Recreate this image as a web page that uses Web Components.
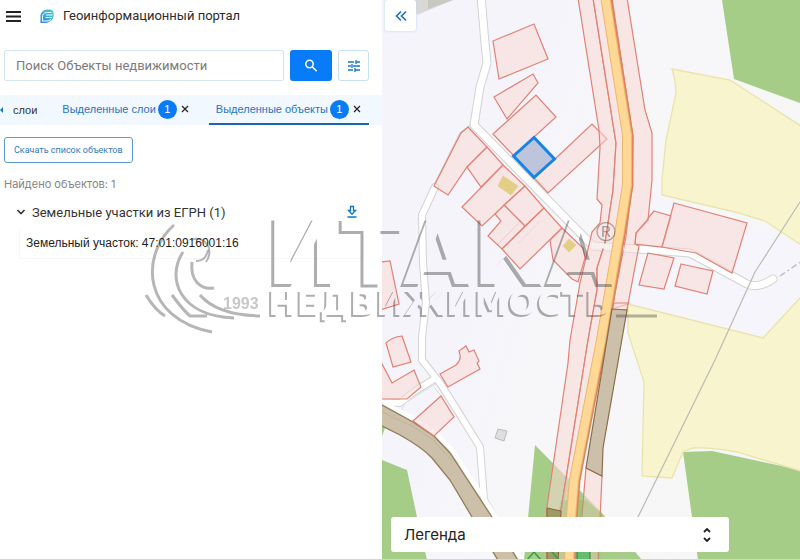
<!DOCTYPE html>
<html lang="ru">
<head>
<meta charset="utf-8">
<meta name="viewport" content="width=device-width, initial-scale=1">
<title>Геоинформационный портал</title>
<style>
html, body { height: 100%; }
body { margin: 0; font-family: Roboto, "Liberation Sans", sans-serif; color: #333; background: #fff; overflow: hidden; }
</style>
</head>
<body>
<geo-portal></geo-portal>
<script>
const define = (name, html) => customElements.define(name, class extends HTMLElement {
  constructor() {
    super();
    const t = document.createElement('template');
    t.innerHTML = '<style>*{box-sizing:border-box}button,input{font:inherit;margin:0}svg{display:block}</style>' + html;
    this.attachShadow({ mode: 'open' }).append(t.content.cloneNode(true));
  }
});

define('portal-header', `
<style>
:host { display: flex; align-items: center; height: 32px; padding-left: 4px; gap: 16px; }
button { border: 0; background: none; padding: 0; width: 18px; height: 18px; }
.brand { display: flex; align-items: center; gap: 8px; font-size: 13px; line-height: 16px; color: #2c2c2c; }
</style>
<button aria-label="Меню"><svg width="18" height="18" viewBox="0 0 18 18" stroke="#222" stroke-width="2"><path d="M2 5h15M2 9.500h15M2 14h15"/></svg></button>
<div class="brand">
<svg width="17" height="16" viewBox="0 0 17 16" fill="none"><defs><linearGradient id="g" x1="0" y1="1" x2="1" y2="0"><stop stop-color="#3d7ddd"/><stop offset="1" stop-color="#43dcd2"/></linearGradient></defs>
<path d="M2.500 15V8A6.500 6.500 0 0 1 9 1.500h3C16 2 16 6 15.500 8.500 14.500 12.500 11 15 7 15Z" fill="url(#g)"/><path d="M4.500 13.500V9a4.500 4.500 0 0 1 4-4.500h5M8 7h6.500M7.500 9.500h6.500M5 13h4q2 0 4-1.500" stroke="#eaffff" stroke-width="1"/></svg>
<span>Геоинформационный портал</span></div>`);

define('search-bar', `
<style>
:host { display: block; padding: 18px 13px 14px 4px; }
form { display: flex; gap: 6px; height: 31px; margin: 0; }
input { flex: 1; min-width: 0; border: 1px solid #d3e5f3; border-radius: 2px; padding: 0 11px; font-size: 13px; color: #333; background: #fff; outline: 0; }
input::placeholder { color: #7b7b7b; opacity: 1; }
button { display: grid; place-items: center; padding: 0; border-radius: 3px; }
.go { width: 42px; border: 0; background: #087cf8; }
.filter { width: 31px; border: 1px solid #c8e0f5; background: #fff; }
</style>
<form>
<input type="text" placeholder="Поиск Объекты недвижимости" aria-label="Поиск">
<button type="button" class="go" aria-label="Найти"><svg width="14" height="14" viewBox="0 0 14 14" fill="none" stroke="#fff" stroke-width="1.500"><circle cx="5.500" cy="5" r="3.700"/><path d="m8.200 7.700 4.500 4.500"/></svg></button>
<button type="button" class="filter" aria-label="Фильтры"><svg width="14" height="14" viewBox="0 0 14 14" stroke="#1677c8" stroke-width="1.300"><path d="M1 3h6M9 3h4M9 1v4M1 7h3M5 5v4M6 7h7M1 11h5M8 11h5M8 9v4"/></svg></button>
</form>`);

define('tab-item', `
<style>
:host { display: flex; align-items: center; height: 30px; font-family: "Liberation Sans", Arial, sans-serif; font-size: 11px; gap: 2px; color: #2875c0; border-bottom: 2px solid transparent; padding: 0 6px 0 7px; flex: none; }
:host([active]) { border-color: #1c66ad; }
button { border: 0; background: none; padding: 0; color: inherit; white-space: nowrap; display: flex; align-items: center; gap: 2px; }
.x { width: 12px; height: 14px; justify-content: center; }
</style>
<button role="tab"><slot></slot></button><button class="x" aria-label="Закрыть"><svg width="8" height="8" viewBox="0 0 8 8" stroke="#222" stroke-width="1.200"><path d="m1 1 6 6M7 1 1 7"/></svg></button>`);

define('count-badge', `
<style>:host { display: grid; place-items: center; width: 19px; height: 19px; border-radius: 50%; background: #087cf8; color: #fff; font: 11px/19px "Liberation Sans", sans-serif; }</style><slot></slot>`);

define('tab-strip', `
<style>
:host { display: flex; align-items: center; height: 30px; background: #f1f8ff; font-family: "Liberation Sans", Arial, sans-serif; font-size: 11px; overflow: hidden; }
.first { border: 0; background: none; padding: 0 18px 0 9px; color: #333; }
.tabs { display: flex; gap: 12px; }
</style>
<svg width="4" height="8" viewBox="0 0 4 8"><path d="M3 1v6L0 4Z" fill="#1879dd"/></svg>
<button class="first">слои</button>
<div class="tabs" role="tablist">
<tab-item>Выделенные слои<count-badge>1</count-badge></tab-item>
<tab-item active>Выделенные объекты<count-badge>1</count-badge></tab-item>
</div>`);

define('object-list', `
<style>
:host { display: block; padding: 12px 4px; }
.save { display: block; height: 26px; padding: 0 9px; border: 1px solid #5b9bd5; border-radius: 3px; background: #fff; color: #2c7cc4; font: 9px/12px Roboto, sans-serif; }
.found { margin: 13px 0 0; font: 11px/16px Inter, sans-serif; color: #858585; }
.group { display: flex; align-items: center; height: 24px; margin-top: 8px; padding: 0 20px 0 12px; font-size: 13px; color: #333; }
.group button { border: 0; background: none; padding: 0; display: flex; align-items: center; gap: 6px; }
.group .toggle { flex: 1; color: inherit; }
.row { margin: 4px 15px 0; padding: 6px 6px 0; height: 31px; border: 1px solid #f7f7f8; border-top-color: transparent; font: 12px/16px "Liberation Sans", Arial, sans-serif; color: #1d1d1d; }
</style>
<button class="save">Скачать список объектов</button>
<p class="found">Найдено объектов: 1</p>
<div class="group"><button class="toggle" aria-expanded="true"><svg width="10" height="10" viewBox="0 0 10 10" fill="none" stroke="#333" stroke-width="1.600"><path d="m1.500 3 3.500 3.500L8.500 3"/></svg>Земельные участки из ЕГРН (1)</button>
<button aria-label="Скачать"><svg width="12" height="14" viewBox="0 0 12 14" fill="none" stroke="#0b75cf" stroke-width="1.300"><path d="M4.500 1.500h3V5.500H9.500L6 9.200 2.500 5.500h2ZM1.500 12h9"/></svg></button></div>
<div class="row">Земельный участок: 47:01:0916001:16</div>`);

define('parcel-map', `
<style>
:host { display: block; position: absolute; inset: 0; }
svg { width: 100%; height: 100%; }
.road-edge { fill: none; stroke: #d2d3d3; stroke-width: 9; stroke-linejoin: round; stroke-linecap: round; }
.road { fill: none; stroke: #fff; stroke-width: 7; stroke-linejoin: round; stroke-linecap: round; }
.minor.road-edge { stroke-width: 8; }
.minor.road { stroke-width: 6; }
.p { fill: #f9d9d6; fill-opacity: .55; stroke: #e38175; stroke-width: 1.200; }
.field { fill: #f8f4ce; stroke: #e9e4a9; stroke-width: 1.300; }
.wood { fill: #a5cd87; }
</style>
<svg viewBox="382 0 418 560" preserveAspectRatio="xMinYMin slice" role="img" aria-label="Карта участков">
<defs><linearGradient id="bg" x1="382" x2="800" y1="200" y2="330" gradientUnits="userSpaceOnUse"><stop offset=".25" stop-color="#f5f4fb"/><stop offset=".5" stop-color="#f7f7f9"/><stop offset="1" stop-color="#f6f6f6"/></linearGradient></defs>
<path fill="url(#bg)" d="M382 0h418v560H382z"/>
<path d="M636 190 800 240V300L763 338 628 304Z" fill="#f6f5fb"/>
<path d="M414 0h39l-36 15Z" fill="#d9d8d5"/><path d="M428 0h25l-25 9Z" fill="#c9c7c1"/>
<g class="wood"><path d="M722 0 734 79 800 103V0Z"/><path d="M683 452 712 451 800 470V560H698Z"/><path d="M535 445 602 513 642 560H524Z"/><path d="M382 460 407 470 417 517 427 560H382ZM382 426l3 2-3 8Z"/></g>
<g class="field"><path d="M672 69 730 80 801 126V245L765 221 735 212 662 195V180L666 140 676 93Q676 82 672 69Z"/><path d="M628 304 763 338 801 297V471L737 452Q710 447 693 448L683 452 672 478 642 476 644 382 628 333Z"/></g>
<path d="M434 185 460 133 472 124" fill="none" stroke="#cfd4cd" stroke-width="1.200"/>
<path class="road-edge" d="M481-4 485 43 487 63 480 87 474 125 593 246 638 249 690 253 747 284Q758 289 773 279"/>
<path class="road-edge minor" d="M435 187 422 215 423 263 426 303 422 337 422 360 440 383 457 410 480 447 484 500 500 528M436 378 415 391 400 403 378 402"/>
<path d="M399 416 405 403 437 383M450 412 441 396 434 387M441 440 484 498" fill="none" stroke="#dddddf"/>
<path class="road" d="M481-4 485 43 487 63 480 87 474 125 593 246 638 249 690 253 747 284Q758 289 773 279"/>
<path class="road minor" d="M435 187 422 215 423 263 426 303 422 337 422 360 440 383 457 410 480 447 484 500 500 528M436 378 415 391 400 403 378 402"/>
<path d="M780 276 802 261" stroke="#bebebe" stroke-width="1.500" stroke-dasharray="6 3 2 3"/>
<path d="M800 202 755 272 715 360 638 517 618 562" fill="none" stroke="#bdb9b0" stroke-width="1.200"/>
<path d="M384 403 415 419 437 434 453 451 495 515 523 562" fill="none" stroke="#fff" stroke-width="4"/>
<path d="M380 404 413 422 435 437 450 453 492 517 519 562H499L472 517 450 480 432 458Q423 448 400 435L380 425Z" fill="#cdc0ab" stroke="#8f7d55" stroke-width="1.300"/>
<path d="M380 411 412 426 433 440 452 461" fill="none" stroke="#c0b39e"/>
<g class="p">
<path d="M493 41 534 24 548 59 499 79Z"/><path d="M494 97 533 74 538 83 507 119Z"/><path d="M493 134 536 95 556 117 534 137 514 156Z"/>
<path d="M555 159 592 124 607 139 548 193 534 178Z"/>
<path d="M468 127 487 147 467 167 448 195 434 186 461 133Z"/><path d="M487 147 503 165 481 187 467 167Z"/>
<path d="M503 165 525 186 482 226 462 207Z"/><path d="M525 186 544 208 525 226 504 205Z"/><path d="M504 205 525 226 502 249 488 236 501 221 495 214Z"/><path d="M544 208 562 228 520 269 502 249Z"/>
<path d="M562 228 583 248 585 258 578 282 572 279 553 260 550 240Z"/>
<path d="M380 262 390 261 399 304 380 310Z"/><path d="M386 343Q392 337 402 336L411 362 393 367Z"/><path d="M380 360 392 383 414 370 421 387 407 399H380Z"/>
<path d="M440 374 456 365Q461 360 460 355L459 351 466 346 469 352 474 350 479 361 477 363 480 369 448 387Z"/><path d="M413 421 441 396 454 417 434 436Z"/>
<path d="M654 211 671 216 662 247 635 244 636 233Z"/><path d="M674 203 747 223 732 273 696 253 662 247Z"/><path d="M648 253 674 258 664 289 639 285Z"/><path d="M681 264 713 271 707 294 675 286Z"/>
<path d="M578-2 599 130 600 147 597 199 602 205 600 223 592 232 580 283 570 340 568 363 547 507V562H557L561 510 588 340 597 290 597 268 605 243 613 190 616 143 593-2Z"/>
<path d="M593-2 616 143 613 190 605 243 597 268 597 290 588 340 561 510 557 562H570L576 480 602 340 621 235 628 185 628 135 607-2Z"/>
<path d="M612-2 633 137 632 185 626 236 612 309 628 304 639 246 635 244 636 233 648 220 652 180 652 133 645 110 627-2Z"/>
<path d="M614 303H628L627 310H612Z"/><path d="M586 468 602 476 598 562H578Z"/>
</g>
<path d="M548 562 561 500 586 500 602 514 600 562Z" fill="#8fae5c" fill-opacity=".3"/>
<path d="M592 245 624 248" stroke="#f4f1f1" stroke-width="5"/>
<path d="M606-4 628 135V185L620 235 602 340 575 480 572 517 570 564" fill="none" stroke="#df8260" stroke-width="11"/>
<path d="M605-4 627 135V185L619 235 601 340 574 480 571 517 569 564" fill="none" stroke="#edb86c" stroke-width="10"/>
<path d="M605-4 627 135V185L619 235 601 340 574 480 571 517 569 564" fill="none" stroke="#fed894" stroke-width="8"/>
<path d="M612 309 627 310 603 448 602 476 586 468Z" fill="#cdc0ab" stroke="#896e48" stroke-width="1.200"/>
<path d="M547 508 561 511 558 562H547Z" fill="#9c9c65" stroke="#8d623c"/><path d="M577 550h13v12h-13Z" fill="#64bd70" stroke="#45733a"/>
<path d="M527 560 534 552 541 560M552 552 559 560" fill="none" stroke="#3f9b4c" stroke-width="1.500"/>
<path d="M498 186 503 176 518 186 511 195ZM569 239 576 245 569 252 563 246Z" fill="#e2cf85" stroke="#d8ca70" stroke-width=".500"/>
<path d="M498 429 507 431 504 441 495 438Z" fill="#dedede" stroke="#bcbcbc"/>
<path d="M534 137.500 554.500 159 534 177.500 513.500 156Z" fill="#bcc5db" stroke="#1683e5" stroke-width="3"/>
</svg>`);

define('map-view', `
<style>
:host { display: flex; flex-direction: column; justify-content: space-between; position: relative; min-width: 0; overflow: hidden; }
.fold, .legend { position: relative; border: 0; background: #fff; }
.fold { width: 31px; height: 31px; margin-left: 3px; padding: 0; display: grid; place-items: center; border-radius: 3px; box-shadow: 0 0 3px #bad5ee; }
.legend { display: flex; align-items: center; justify-content: space-between; height: 35px; margin: 0 71px 8px 9px; padding: 0 17px 0 13px; border-radius: 3px; font: 15px/20px Inter, sans-serif; color: #222; }
</style>
<parcel-map></parcel-map>
<button class="fold" aria-label="Свернуть панель"><svg width="12" height="12" viewBox="0 0 12 12" fill="none" stroke="#1a6fc4" stroke-width="1.600"><path d="M6 1.500 1.500 6 6 10.500M11 1.500 6.500 6l4.500 4.500"/></svg></button>
<button class="legend">Легенда<svg width="10" height="16" viewBox="0 0 10 16" fill="none" stroke="#222" stroke-width="1.800"><path d="M2 5l3-3 3 3M2 11l3 3 3-3"/></svg></button>`);

/* Only the left and bottom edges of each shape stay visible, as in an emboss. */
define('agency-watermark', `
<style>
:host { display: block; position: absolute; inset: 0; pointer-events: none; }
svg { width: 100%; height: 100%; }
</style>
<svg viewBox="0 0 800 560" preserveAspectRatio="xMinYMin slice">
<defs>
<filter id="e" x="-5%" y="-20%" width="110%" height="140%"><feOffset in="SourceAlpha" dx="3" dy="-3" result="o"/><feComposite in="SourceGraphic" in2="o" operator="out"/><feGaussianBlur stdDeviation=".5"/></filter>
<filter id="s" x="-5%" y="-20%" width="110%" height="140%"><feOffset in="SourceAlpha" dx="2" dy="-2" result="o"/><feComposite in="SourceGraphic" in2="o" operator="out"/><feGaussianBlur stdDeviation=".4"/></filter>
</defs>
<g fill="#404040" opacity=".42">
<text x="263" y="287" font-family="DejaVu Sans" font-weight="700" font-size="90" filter="url(#e)">ИТАКА</text>
<text x="266" y="317" font-family="DejaVu Sans" font-weight="700" font-size="34" filter="url(#s)">НЕДВИЖИМОСТЬ</text>
<text x="223" y="309" font-family="Liberation Sans" font-weight="700" font-size="16" opacity=".7">1993</text>
<text x="596" y="241" font-family="Liberation Sans" font-size="27">®</text>
</g>
<g fill="none" stroke="#404040" stroke-opacity=".38" stroke-width="3">
<path d="M174 225C139 256 143 319 212 332"/><path d="M183 252C166 278 179 316 234 318"/><path d="M192 262C190 280 200 290 214 288"/><path d="M191 240C205 234 215 250 206 262" stroke-width="2"/><path d="M196 261Q206 261 208 250" stroke-width="2"/>
<path d="M146 295Q155 310 165 316M172 295Q183 310 190 316H207M200 295Q217 315 260 316M616 316H657"/>
</g>
</svg>`);

define('geo-portal', `
<style>
:host { display: grid; grid-template-columns: 191fr 209fr; position: relative; height: 100vh; }
main { min-width: 0; background: #fff; }
.edge { position: absolute; inset: auto 0 0 0; height: 1px; background: #dcd0d4; }
</style>
<main><portal-header></portal-header><search-bar></search-bar><tab-strip></tab-strip><object-list></object-list></main>
<map-view></map-view>
<agency-watermark></agency-watermark><div class="edge"></div>`);
</script>
</body>
</html>
